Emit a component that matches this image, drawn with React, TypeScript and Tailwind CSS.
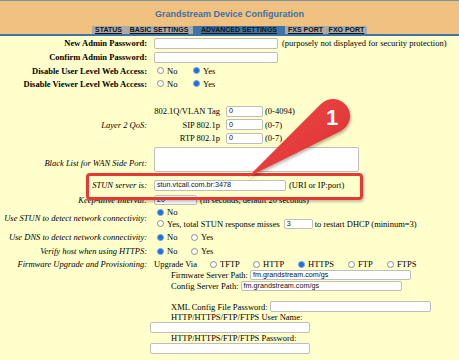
import React from 'react';

const serif = "font-['Liberation_Serif',serif]";
const sans = "font-['Liberation_Sans',Arial,sans-serif]";

function Radio({ on }: { on?: boolean }) {
  return on ? (
    <span className="inline-block w-[7px] h-[7px] rounded-full bg-[#1f6fe0] border border-[#6a9ff0] shrink-0" />
  ) : (
    <span className="inline-block w-[7px] h-[7px] rounded-full bg-white border border-[#8c8c8c] shrink-0" />
  );
}

function Opt({ on, label, className = '' }: { on?: boolean; label: string; className?: string }) {
  return (
    <span className={`flex items-center gap-[3px] ${className}`}>
      <Radio on={on} />
      <span>{label}</span>
    </span>
  );
}

function Field({ className = '', value = '' }: { className?: string; value?: string }) {
  return (
    <div
      className={`bg-white border border-[#bdbdbd] rounded-[2px] px-[2px] flex items-center text-[7.2px] text-[#111] shrink-0 ${sans} ${className}`}
    >
      {value}
    </div>
  );
}

function Label({ children, bold, className = '' }: { children: React.ReactNode; bold?: boolean; className?: string }) {
  return (
    <div className={`w-[147px] shrink-0 text-right ${bold ? 'font-bold' : 'italic'} ${className}`}>{children}</div>
  );
}

const tabs = [
  { name: 'STATUS', w: 'w-[33px]' },
  { name: 'BASIC SETTINGS', w: 'w-[68px]' },
  { name: 'ADVANCED SETTINGS', w: 'w-[92px]', active: true },
  { name: 'FXS PORT', w: 'w-[41px]' },
  { name: 'FXO PORT', w: 'w-[41px]' },
];

export default function App() {
  return (
    <div className={`relative w-[459px] h-[360px] overflow-hidden bg-[#ffffcc] text-[8.5px] leading-[10px] text-black whitespace-nowrap ${serif}`}>
      {/* header */}
      <div className="h-[34px] border-t border-[#7d90a4] bg-[#f1c27f] flex flex-col items-center">
        <div className={`mt-[7px] text-[9px] leading-[12px] font-bold text-[#3e6fa8] ${sans}`}>
          Grandstream Device Configuration
        </div>
        <div className={`mt-auto flex h-[8px] bg-[#a9a9a9] ${sans}`}>
          {tabs.map(t => (
            <div
              key={t.name}
              className={`${t.w} flex items-center justify-center text-[7px] leading-[8px] font-bold underline text-[#141414] ${t.active ? 'bg-[#3f74a8]' : ''}`}
            >
              {t.name}
            </div>
          ))}
        </div>
      </div>
      <div className="h-[2px] bg-[#3f74a8]" />

      {/* form */}
      <div className="flex flex-col">
        <div className="h-[14px] flex items-center gap-[7px]">
          <Label bold>New Admin Password:</Label>
          <Field className="w-[124px] h-[11px]" />
          <span className="ml-[-3px]">(purposely not displayed for security protection)</span>
        </div>
        <div className="h-[14px] flex items-center gap-[7px]">
          <Label bold>Confirm Admin Password:</Label>
          <Field className="w-[124px] h-[11px]" />
        </div>
        <div className="h-[13px] flex items-center gap-[7px]">
          <Label bold>Disable User Level Web Access:</Label>
          <div className="flex items-center pl-[3px]">
            <Opt label="No" className="w-[36px]" />
            <Opt on label="Yes" />
          </div>
        </div>
        <div className="h-[13px] flex items-center gap-[7px]">
          <Label bold>Disable Viewer Level Web Access:</Label>
          <div className="flex items-center pl-[3px]">
            <Opt label="No" className="w-[36px]" />
            <Opt on label="Yes" />
          </div>
        </div>
        <div className="h-[14px]" />

        <div className="flex items-center gap-[7px]">
          <Label>Layer 2 QoS:</Label>
          <div className="flex flex-col">
            {[
              { k: '802.1Q/VLAN Tag', r: '(0-4094)', h: 'h-[14px]' },
              { k: 'SIP 802.1p', r: '(0-7)', h: 'h-[13px]' },
              { k: 'RTP 802.1p', r: '(0-7)', h: 'h-[14px]' },
            ].map(q => (
              <div key={q.k} className={`${q.h} flex items-center`}>
                <span className="w-[66px] text-right">{q.k}</span>
                <Field className="ml-[6px] w-[37px] h-[11px]" value="0" />
                <span className="ml-[2px]">{q.r}</span>
              </div>
            ))}
          </div>
        </div>

        <div className="h-[31px] flex gap-[7px]">
          <Label className="self-end mb-[8px]">Black List for WAN Side Port:</Label>
          <div className="mt-[2px] w-[205px] h-[25px] bg-white border border-[#bdbdbd] rounded-[2px]" />
        </div>
        <div className="h-[18px] flex items-center gap-[7px]">
          <Label>STUN server is:</Label>
          <Field className="w-[132px] h-[11px]" value="stun.vtcall.com.br:3478" />
          <span className="ml-[-4px]">(URI or IP:port)</span>
        </div>
        <div className="h-[11px] flex items-center gap-[7px]">
          <Label>Keep-alive Interval:</Label>
          <Field className="w-[43px] h-[10px]" value="20" />
          <span className="ml-[-4px]">(in seconds, default 20 seconds)</span>
        </div>
        <div className="h-[25px] flex items-center gap-[7px]">
          <Label>Use STUN to detect network connectivity:</Label>
          <div className="flex flex-col pl-[3px]">
            <div className="h-[12px] flex items-center">
              <Opt on label="No" />
            </div>
            <div className="h-[11px] flex items-center">
              <Opt label="Yes, total STUN response misses" />
              <Field className="ml-[4px] w-[29px] h-[10px]" value="3" />
              <span className="ml-[2px]">to restart DHCP (mininum=3)</span>
            </div>
          </div>
        </div>
        <div className="h-[14px] flex items-center gap-[7px]">
          <Label>Use DNS to detect network connectivity:</Label>
          <div className="flex items-center pl-[3px]">
            <Opt on label="No" className="w-[34px]" />
            <Opt label="Yes" />
          </div>
        </div>
        <div className="h-[14px] flex items-center gap-[7px]">
          <Label>Verify host when using HTTPS:</Label>
          <div className="flex items-center pl-[3px]">
            <Opt on label="No" className="w-[34px]" />
            <Opt label="Yes" />
          </div>
        </div>

        <div className="flex gap-[7px]">
          <Label className="h-[12px] leading-[12px]">Firmware Upgrade and Provisioning:</Label>
          <div className="flex flex-col">
            <div className="h-[12px] flex items-center">
              <span className="w-[56px]">Upgrade Via</span>
              <Opt label="TFTP" className="w-[43px]" />
              <Opt label="HTTP" className="w-[45px]" />
              <Opt on label="HTTPS" className="w-[50px]" />
              <Opt label="FTP" className="w-[39px]" />
              <Opt label="FTPS" />
            </div>
            <div className="h-[10px] flex items-center pl-[17px]">
              <span>Firmware Server Path:</span>
              <Field className="ml-[2px] w-[161px] h-[10px]" value="fm.grandstream.com/gs" />
            </div>
            <div className="h-[11px] flex items-center pl-[17px]">
              <span>Config Server Path:</span>
              <Field className="ml-[2px] w-[161px] h-[10px]" value="fm.grandstream.com/gs" />
            </div>
            <div className="h-[10px]" />
            <div className="h-[11px] flex items-center pl-[17px]">
              <span>XML Config File Password:</span>
              <Field className="ml-[2px] w-[161px] h-[11px]" />
            </div>
            <div className="h-[10px] flex items-center pl-[17px]">HTTP/HTTPS/FTP/FTPS User Name:</div>
            <div className="h-[11px] flex items-center">
              <Field className="ml-[-4px] w-[160px] h-[11px]" />
            </div>
            <div className="h-[10px] flex items-center pl-[17px]">HTTP/HTTPS/FTP/FTPS Password:</div>
            <div className="h-[11px] flex items-center">
              <Field className="ml-[-4px] w-[160px] h-[11px]" />
            </div>
          </div>
        </div>
      </div>

      {/* annotation overlay */}
      <div className="absolute left-[86px] top-[173px] w-[277px] h-[27px] border-[3px] border-[#e53935] rounded-[4px] shadow-[1px_2px_3px_rgba(0,0,0,0.25)] pointer-events-none" />
      <svg className="absolute left-0 top-0 pointer-events-none" width="459" height="360" viewBox="0 0 459 360">
        <defs>
          <linearGradient id="pin" x1="0" y1="0" x2="1" y2="1">
            <stop offset="0" stopColor="#f24a4a" />
            <stop offset="1" stopColor="#d92f2f" />
          </linearGradient>
          <filter id="sh" x="-20%" y="-20%" width="140%" height="140%">
            <feDropShadow dx="1" dy="2" stdDeviation="1.5" floodColor="#000" floodOpacity="0.3" />
          </filter>
        </defs>
        <path d="M248 177 L320.9 104 A17 17 0 1 1 340.5 131.2 Z" fill="url(#pin)" filter="url(#sh)" />
        <text x="332" y="125" textAnchor="middle" fill="#fff" fontSize="22" fontWeight="bold" fontFamily="Liberation Sans, Arial, sans-serif">
          1
        </text>
      </svg>
    </div>
  );
}
